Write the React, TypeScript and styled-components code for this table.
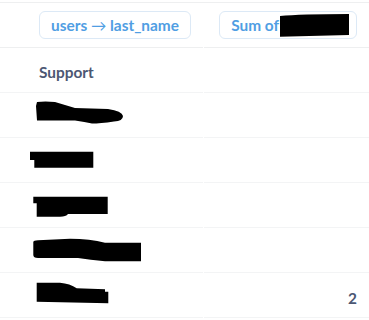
import React from "react";
import styled, { createGlobalStyle } from "styled-components";

const GlobalStyle = createGlobalStyle`
  html, body {
    margin: 0;
    padding: 0;
    background: #ffffff;
  }
  body {
    font-family: Lato, "Noto Sans", "Liberation Sans", sans-serif;
    -webkit-font-smoothing: antialiased;
  }
`;

const Table = styled.div`
  margin-top: 2px;
  width: 369px;
  border-top: 1px solid #eeeff0;
  display: grid;
  grid-template-columns: 203px 1fr;
  column-gap: 1px;
`;

const HeaderCell = styled.div<{ $align: "start" | "end" }>`
  height: 44px;
  border-bottom: 1px solid #eeeff0;
  display: flex;
  align-items: center;
  justify-content: ${(p) => (p.$align === "end" ? "flex-end" : "flex-start")};
  padding: ${(p) => (p.$align === "end" ? "0 12px 0 0" : "0 0 0 39px")};
`;

const Pill = styled.div<{ $padRight: number }>`
  height: 26px;
  display: inline-flex;
  align-items: center;
  padding: 0 ${(p) => p.$padRight}px 0 11px;
  border: 1px solid #dce9f6;
  border-radius: 6px;
  color: #509ee3;
  font-size: 15.4px;
  font-weight: 700;
  white-space: pre;
`;

const Arrow = styled.span`
  font-weight: 400;
`;

const PillText = styled.span`
  margin-right: 1px;
`;

const BodyCell = styled.div<{ $inset: number; $align: "start" | "end" }>`
  height: 44px;
  border-bottom: 1px solid #f3f4f5;
  display: flex;
  align-items: center;
  justify-content: ${(p) => (p.$align === "end" ? "flex-end" : "flex-start")};
  padding-left: ${(p) => (p.$align === "start" ? p.$inset : 0)}px;
  padding-right: ${(p) => (p.$align === "end" ? p.$inset : 0)}px;
  color: #4c5773;
  font-size: 15.4px;
  font-weight: 700;
`;

const Label = styled.span`
  padding-top: 3px;
`;

const Value = styled.span`
  padding-top: 5px;
`;

const Mask = styled.svg`
  display: block;
  flex: none;
`;

type Redaction = { w: number; h: number; d: string };

// Ink strokes over hidden values, drawn in the cell's own coordinates.
const rowMasks: Redaction[] = [
  {
    w: 112,
    h: 44,
    d: "M6,13 L7,9 Q15,8 25,9 Q35,12 45,15 L78,16 Q92,18 93,23 Q93,28 84,28.5 Q70,30.5 62,30.5 Q55,29 45,27.5 L7,27.5 Z",
  },
  {
    w: 112,
    h: 44,
    d: "M0,13.7 L63.3,13.7 L63.3,29.7 L4.3,29.7 L4.3,22 L0,22 Z",
  },
  {
    w: 112,
    h: 44,
    d: "M3.3,13.7 L77.7,13.7 L77.7,31 L38,31 Q36,33.7 30,33.7 L6.7,33.7 L6.7,20.3 L3.3,20.3 Z",
  },
  {
    w: 112,
    h: 44,
    d: "M3.3,14 Q3.5,12.3 8,12.2 L40,10.7 Q60,10.7 75,14.7 L111,14.7 L111,33.3 L75,33.3 Q60,32 48,30 L8,30 Q3.3,30 3.3,27 Z",
  },
  {
    w: 112,
    h: 44,
    d: "M6.7,9.7 L30,9.7 Q40,10.5 46.7,15.3 L75,16.3 L75,18.7 L78.3,18.7 L78.3,30.3 L6.7,28.7 Z",
  },
];

const rowValues: (string | null)[] = [null, null, null, null, "2"];

const InkMask: React.FC<Redaction> = ({ w, h, d }) => (
  <Mask width={w} height={h} viewBox={`0 0 ${w} ${h}`}>
    <path d={d} fill="#000000" />
  </Mask>
);

export default function App() {
  return (
    <>
      <GlobalStyle />
      <Table>
        <HeaderCell $align="start">
          <Pill $padRight={11}>
            <span>
              users <Arrow>→</Arrow> last_name
            </span>
          </Pill>
        </HeaderCell>
        <HeaderCell $align="end">
          <Pill $padRight={7}>
            <PillText>Sum of</PillText>
            <InkMask w={69} h={23} d="M0,2 Q20,0 69,0 L69,21 L0,22.7 Z" />
          </Pill>
        </HeaderCell>

        <BodyCell $inset={39} $align="start">
          <Label>Support</Label>
        </BodyCell>
        <BodyCell $inset={12} $align="end" />

        {rowMasks.map((m, i) => (
          <React.Fragment key={i}>
            <BodyCell $inset={30} $align="start">
              <InkMask {...m} />
            </BodyCell>
            <BodyCell $inset={12} $align="end">
              {rowValues[i] && <Value>{rowValues[i]}</Value>}
            </BodyCell>
          </React.Fragment>
        ))}
      </Table>
    </>
  );
}
